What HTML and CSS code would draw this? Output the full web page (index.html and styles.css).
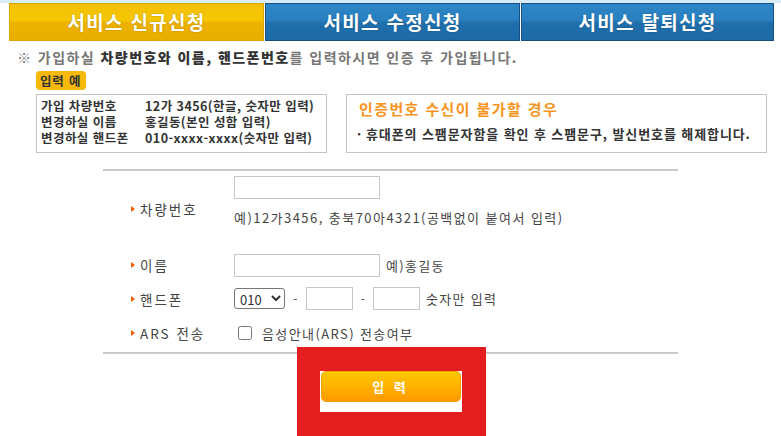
FILE: index.html
```html
<!DOCTYPE html>
<html lang="ko">
<head>
<meta charset="utf-8">
<link rel="stylesheet" href="styles.css">
</head>
<body>
<div class="page">
  <div class="topstrip"></div>
  <div class="tabs">
    <div class="tab tab-on">서비스 신규신청</div>
    <div class="tab tab-off">서비스 수정신청</div>
    <div class="tab tab-off">서비스 탈퇴신청</div>
  </div>
  <p class="notice">※ 가입하실 <b>차량번호와 이름, 핸드폰번호</b>를 입력하시면 인증 후 가입됩니다.</p>
  <div class="badge">입력 예</div>
  <div class="boxes">
    <div class="box example">
      <div class="ex-row"><span class="ex-label">가입 차량번호</span><span>12가 3456(한글, 숫자만 입력)</span></div>
      <div class="ex-row"><span class="ex-label">변경하실 이름</span><span>홍길동(본인 성함 입력)</span></div>
      <div class="ex-row"><span class="ex-label">변경하실 핸드폰</span><span>010-xxxx-xxxx(숫자만 입력)</span></div>
    </div>
    <div class="box help">
      <div class="help-title">인증번호 수신이 불가할 경우</div>
      <div class="help-text"><span class="dot">·</span>휴대폰의 스팸문자함을 확인 후 스팸문구, 발신번호를 해제합니다.</div>
    </div>
  </div>
  <div class="form">
    <div class="row row-car">
      <div class="label"><span class="arrow"></span>차량번호</div>
      <div class="field field-col">
        <input class="text wide" type="text">
        <div class="hint">예)12가3456, 충북70아4321(공백없이 붙여서 입력)</div>
      </div>
    </div>
    <div class="row row-name">
      <div class="label"><span class="arrow"></span>이름</div>
      <div class="field">
        <input class="text wide" type="text">
        <span class="hint-inline">예)홍길동</span>
      </div>
    </div>
    <div class="row row-phone">
      <div class="label"><span class="arrow"></span>핸드폰</div>
      <div class="field">
        <select class="sel"><option>010</option></select>
        <span class="dash">-</span>
        <input class="text short" type="text">
        <span class="dash">-</span>
        <input class="text short" type="text">
        <span class="hint-inline">숫자만 입력</span>
      </div>
    </div>
    <div class="row row-ars">
      <div class="label"><span class="arrow"></span>ARS 전송</div>
      <div class="field">
        <input class="chk" type="checkbox">
        <span class="chk-label">음성안내(ARS) 전송여부</span>
      </div>
    </div>
  </div>
  <div class="actions">
    <button class="submit" type="button">입 력</button>
  </div>
  <div class="highlight"></div>
</div>
</body>
</html>
```
FILE: styles.css
```css
html, body {
  margin: 0;
  padding: 0;
  background: #fff;
}
.page {
  position: relative;
  width: 781px;
  height: 436px;
  overflow: hidden;
  font-family: "Noto Sans CJK KR", "Noto Sans", sans-serif;
  color: #333;
}
.topstrip {
  height: 3px;
  background: #d7ecf4;
}
.tabs {
  display: flex;
  padding-left: 9px;
}
.tab {
  box-sizing: border-box;
  height: 38px;
  line-height: 36px;
  text-align: center;
  color: #fff;
  font-size: 19px;
  font-weight: bold;
  letter-spacing: 1.3px;
  text-shadow: 0 0 2px rgba(0,0,0,0.25);
}
.tab-on {
  width: 255px;
  border: 1px solid #e0a400;
  background: linear-gradient(#f4c00a 0%, #f5c700 45%, #eeb200 52%, #e9ad00 100%);
}
.tab-off {
  width: 255px;
  margin-left: 1px;
  border: 1px solid #184f84;
  background: linear-gradient(#2d86c6 0%, #2a80c0 45%, #1f70ad 52%, #1d6aa6 100%);
}
.tab-off + .tab-off {
  width: 253px;
}
.notice {
  margin: 7px 0 0 17px;
  font-size: 14px;
  line-height: 18px;
  font-weight: bold;
  color: #777;
  letter-spacing: 1.45px;
}
.notice b {
  color: #333;
}
.badge {
  display: inline-block;
  margin: 5px 0 0 36px;
  width: 50px;
  height: 19px;
  line-height: 19px;
  box-sizing: border-box;
  padding-left: 4px;
  border-radius: 4px;
  background: #f6b90b;
  color: #333;
  font-size: 12.5px;
  font-weight: bold;
  letter-spacing: 0.8px;
}
.boxes {
  display: flex;
  gap: 19px;
  margin: 3px 0 0 36px;
}
.box {
  box-sizing: border-box;
  height: 59px;
  border: 1px solid #c4c4c4;
}
.example {
  width: 291px;
  padding: 3px 0 0 4px;
}
.ex-row {
  display: flex;
  height: 16px;
  font-size: 12.5px;
  line-height: 16px;
  font-weight: bold;
  color: #333;
  letter-spacing: 0.45px;
}
.ex-label {
  width: 104px;
}
.help {
  width: 421px;
  padding: 4px 0 0 12px;
}
.help-title {
  font-size: 15px;
  line-height: 20px;
  font-weight: bold;
  color: #f7941d;
  letter-spacing: 1.4px;
}
.help-text {
  margin-top: 7px;
  font-size: 13px;
  line-height: 16px;
  font-weight: bold;
  color: #333;
  margin-left: -2px;
  letter-spacing: 0.9px;
}
.dot {
  display: inline-block;
  width: 9px;
}
.form {
  margin: 16px 0 0 103px;
  width: 575px;
  border-top: 2px solid #cacaca;
  border-bottom: 2px solid #cacaca;
}
.row {
  display: flex;
  align-items: center;
}
.row-car { height: 76px; }
.row-name { height: 36px; }
.row-phone { height: 31px; }
.row-ars { height: 38px; }
.label {
  box-sizing: border-box;
  width: 131px;
  padding-left: 28px;
  font-size: 13.5px;
  color: #444;
  letter-spacing: 2px;
  display: flex;
  align-items: center;
}
.arrow {
  width: 0;
  height: 0;
  border-top: 3px solid transparent;
  border-bottom: 3px solid transparent;
  border-left: 4px solid #f05a00;
  margin-right: 5px;
}
.field {
  display: flex;
  align-items: center;
  font-size: 13px;
  color: #444;
}
.field-col {
  flex-direction: column;
  align-items: flex-start;
  align-self: flex-start;
  padding-top: 5px;
}
.text {
  box-sizing: border-box;
  height: 23px;
  border: 1px solid #c6c6c6;
  margin: 0;
  padding: 0 3px;
  background: #fff;
}
.wide { width: 146px; }
.short { width: 47px; }
.hint {
  margin-top: 11px;
  line-height: 16px;
  letter-spacing: 1.45px;
}
.hint-inline {
  margin-left: 6px;
  letter-spacing: 1.3px;
}
.sel {
  box-sizing: border-box;
  width: 51px;
  height: 21px;
  margin: 0;
  font-size: 13px;
  font-family: "Noto Sans CJK KR", sans-serif;
  color: #333;
  border: 1px solid #767676;
  border-radius: 3px;
  background: #fff;
  padding: 0 0 0 1px;
}
.dash {
  margin: 0 8px;
  color: #666;
}
.chk {
  width: 14px;
  height: 14px;
  margin: 0 0 0 4px;
}
.chk-label {
  margin-left: 10px;
  letter-spacing: 1.4px;
}
.actions {
  display: flex;
  justify-content: center;
  width: 781px;
  padding-top: 17px;
}
.submit {
  width: 140px;
  height: 31px;
  border: 1px solid #f0a000;
  border-radius: 5px;
  background: linear-gradient(#ffc800, #ff9a00);
  color: #fff;
  font-family: "Noto Sans CJK KR", sans-serif;
  font-size: 13px;
  font-weight: bold;
  letter-spacing: 3px;
  padding: 0;
}
.highlight {
  position: absolute;
  left: 297px;
  top: 347px;
  width: 142px;
  height: 41px;
  border: 24px solid #e41e1f;
  border-left-width: 23px;
}
```
